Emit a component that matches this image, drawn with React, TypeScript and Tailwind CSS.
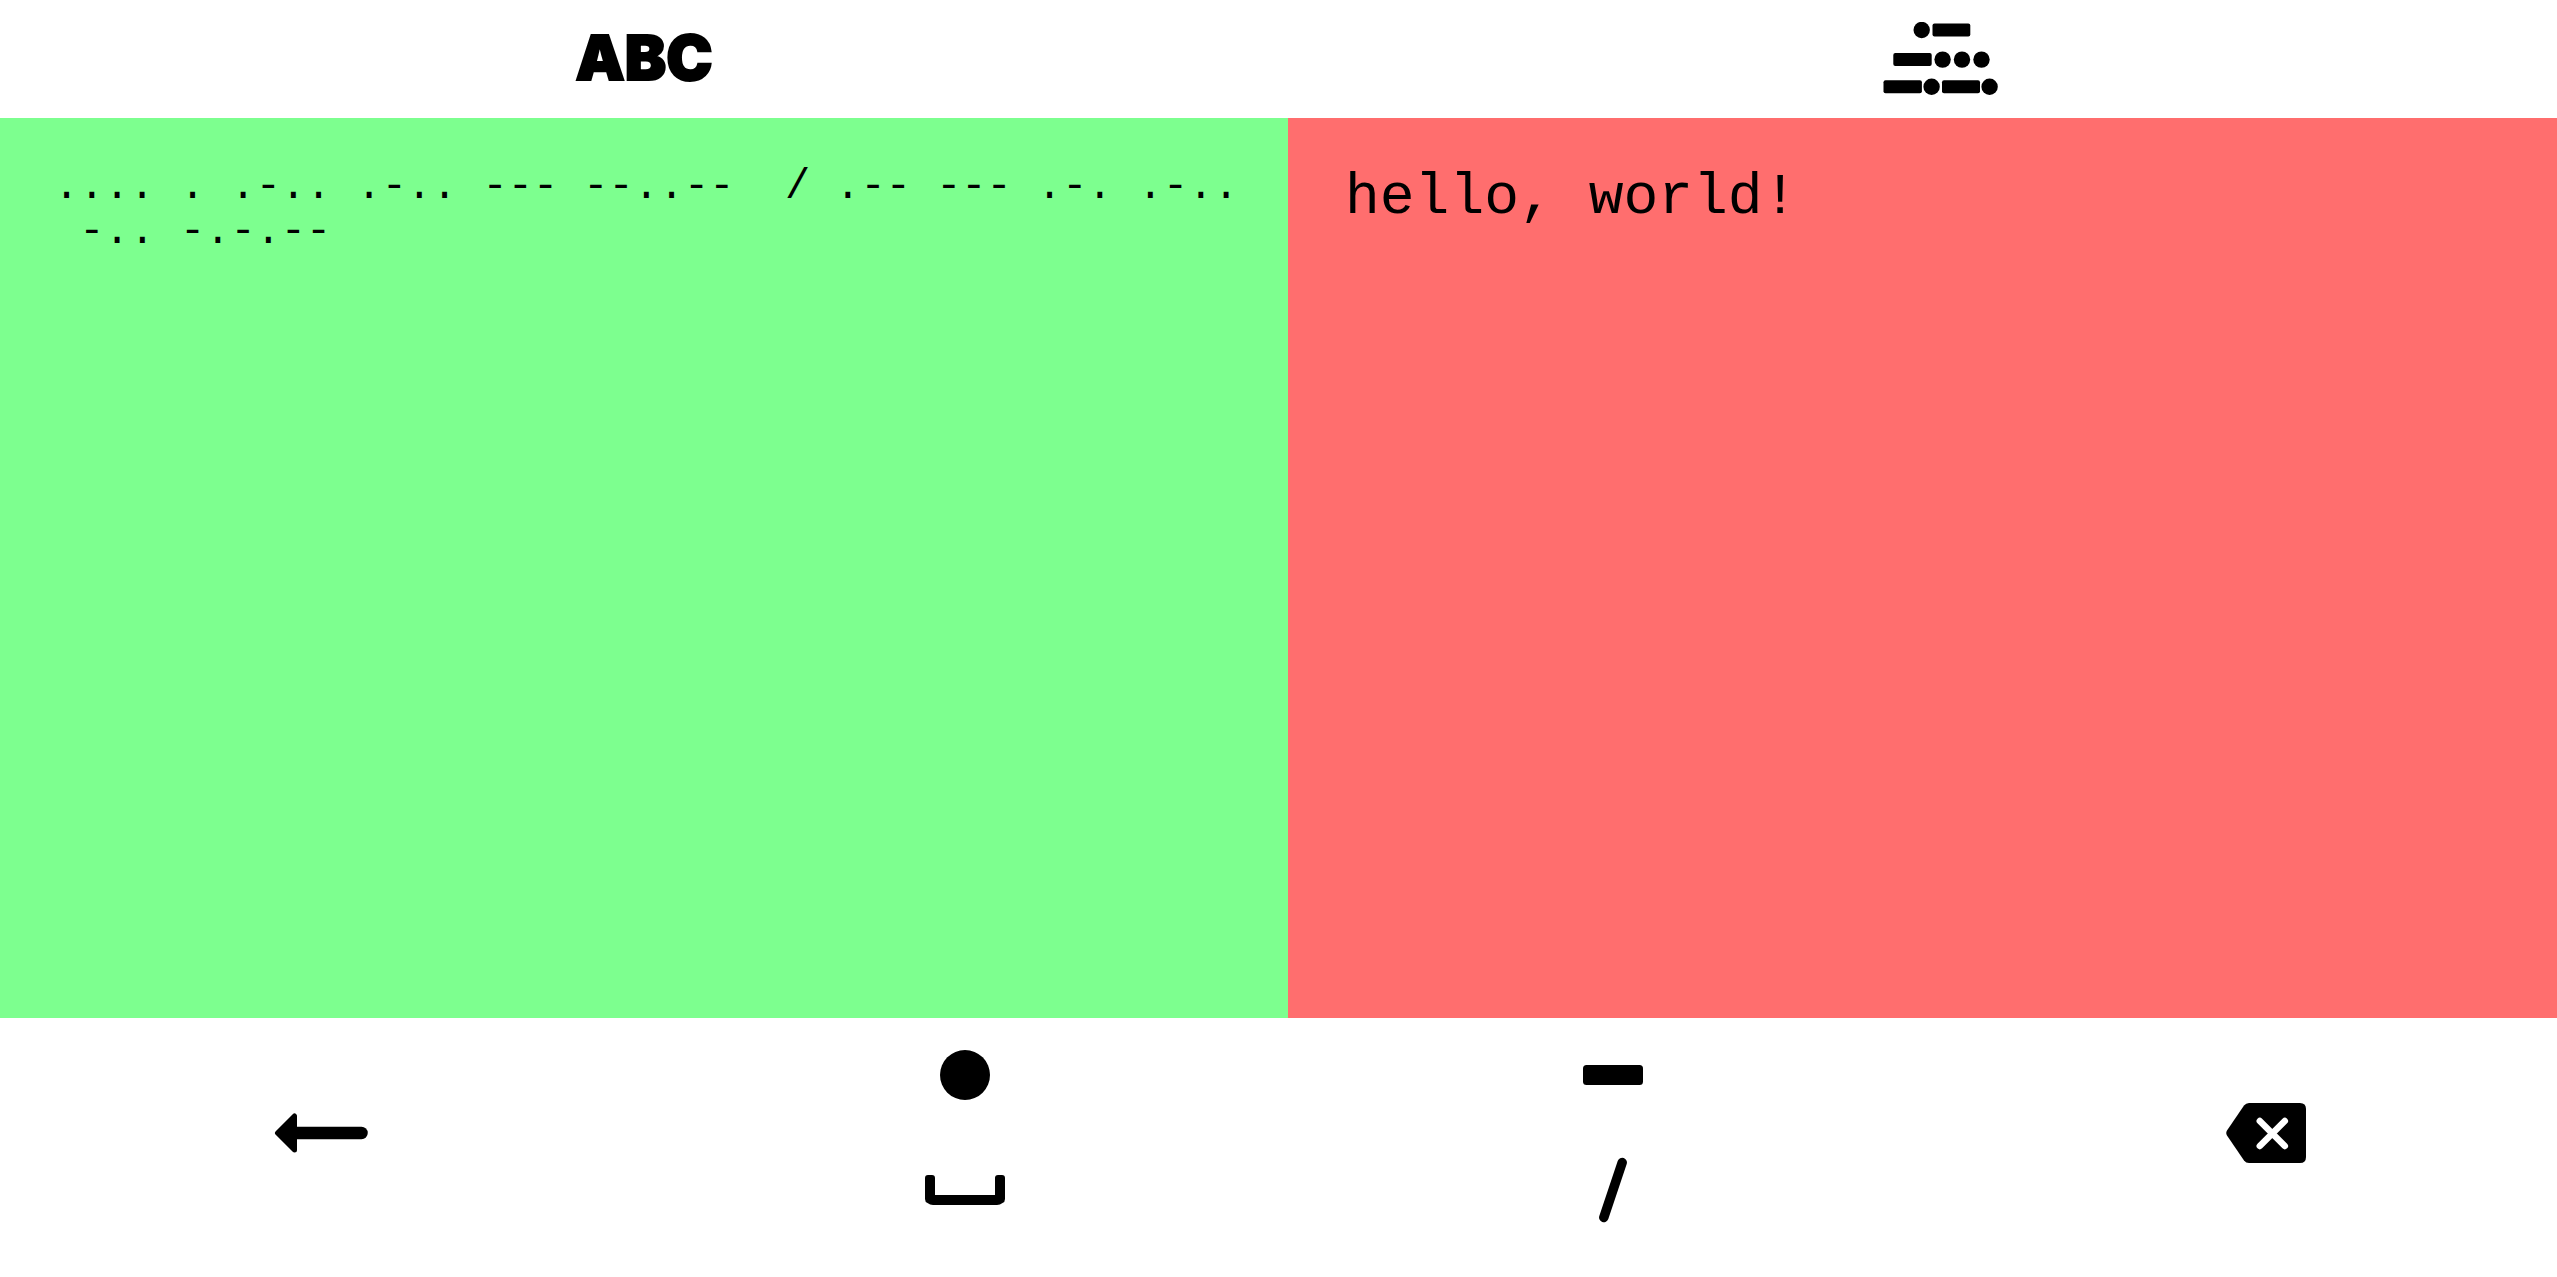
import { useState } from "react";
import type { ReactNode } from "react";

function MorseIcon() {
  return (
    <svg width="115" height="73" viewBox="0 0 115 73" aria-hidden="true">
      <circle cx="38.7" cy="8" r="8.2" />
      <rect x="49.5" y="1.6" width="37.8" height="13" rx="2" />
      <rect x="10.3" y="31.1" width="38.4" height="13" rx="2" />
      <circle cx="59.6" cy="37.6" r="8.2" />
      <circle cx="79" cy="37.6" r="8.2" />
      <circle cx="98.5" cy="37.6" r="8.2" />
      <rect x="0.5" y="58.2" width="38.4" height="13" rx="2" />
      <circle cx="48.6" cy="64.7" r="8.2" />
      <rect x="59" y="58.2" width="38" height="13" rx="2" />
      <circle cx="106.6" cy="64.7" r="8.2" />
    </svg>
  );
}

function ArrowIcon() {
  return (
    <svg width="94" height="42" viewBox="0 0 94 42" aria-hidden="true">
      <path
        d="M3.5 21 L20.5 4 V38 Z"
        stroke="black"
        strokeWidth="5"
        strokeLinejoin="round"
      />
      <path d="M20 21 H87.500" stroke="black" strokeWidth="12.500" strokeLinecap="round" />
    </svg>
  );
}

function DotIcon() {
  return (
    <svg width="50" height="50" viewBox="0 0 50 50" aria-hidden="true">
      <circle cx="25" cy="25" r="25" />
    </svg>
  );
}

function SpaceIcon() {
  return (
    <svg width="80" height="30" viewBox="0 0 80 30" aria-hidden="true">
      <path d="M3 0 H7 Q10 0 10 3 V20 H70 V3 Q70 0 73 0 H77 Q80 0 80 3 V24 Q80 27 77.500 28 Q75 30 72 30 H8 Q5 30 2.500 28 Q0 27 0 24 V3 Q0 0 3 0 Z" />
    </svg>
  );
}

function DashIcon() {
  return (
    <svg width="60" height="20" viewBox="0 0 60 20" aria-hidden="true">
      <rect width="60" height="20" rx="3.5" />
    </svg>
  );
}

function SlashIcon() {
  return (
    <svg width="28" height="66" viewBox="0 0 28 66" aria-hidden="true">
      <path d="M23.2 5.5 L4.8 60.5" stroke="black" strokeWidth="9.5" strokeLinecap="round" />
    </svg>
  );
}

function BackspaceIcon() {
  return (
    <svg width="80" height="60" viewBox="0 0 80 60" aria-hidden="true">
      <path d="M23 0 H74 Q80 0 80 6 V54 Q80 60 74 60 H23 Q20 60 18 57.500 L1 32.500 Q-0.500 30 1 27.500 L18 2.500 Q20 0 23 0 Z" />
      <path
        d="M33.800 18 L58.800 43 M58.800 18 L33.800 43"
        stroke="white"
        strokeWidth="6.500"
        strokeLinecap="round"
      />
    </svg>
  );
}

function Key({
  label,
  onClick,
  children,
}: {
  label: string;
  onClick?: () => void;
  children: ReactNode;
}) {
  return (
    <button
      type="button"
      aria-label={label}
      onClick={onClick}
      className="flex flex-1 cursor-pointer items-center justify-center"
    >
      {children}
    </button>
  );
}

export default function App() {
  const [morse, setMorse] = useState(
    ".... . .-.. .-.. --- --..--  / .-- --- .-. .-..\n -.. -.-.--",
  );
  const [plain, setPlain] = useState("hello, world!");
  const append = (s: string) => setMorse((m) => m + s);

  return (
    <div className="flex h-screen flex-col overflow-hidden bg-white text-black">
      <header className="grid h-[118px] w-[calc(100%+36px)] shrink-0 grid-cols-[1288fr_1305fr] pb-[2px]">
        <h1 className="flex items-center justify-center font-['Inter',sans-serif] text-[62px] leading-none font-black [-webkit-text-stroke:2px_black]">
          ABC
        </h1>
        <div className="flex items-center justify-center">
          <MorseIcon />
        </div>
      </header>

      <main className="grid min-h-0 w-[calc(100%+36px)] flex-1 grid-cols-[1288fr_1305fr] font-['Liberation_Mono',monospace]">
        <textarea
          aria-label="Morse code"
          spellCheck={false}
          value={morse}
          onChange={(e) => setMorse(e.target.value)}
          className="resize-none overflow-hidden bg-[#7dff8f] py-[47px] pr-[36px] pl-[54px] text-[42px] leading-[45px] outline-none"
        />
        <textarea
          aria-label="Plain text"
          spellCheck={false}
          value={plain}
          onChange={(e) => setPlain(e.target.value)}
          className="resize-none overflow-hidden bg-[#ff6e6e] py-[47px] pr-[36px] pl-[57px] text-[58px] leading-[66px] outline-none"
        />
      </main>

      <footer className="grid w-[calc(100%+36px)] shrink-0 grid-cols-[642fr_646fr_650fr_655fr] pb-[30px]">
        <div className="flex h-[229px] flex-col">
          <Key label="New line" onClick={() => append("\n")}>
            <ArrowIcon />
          </Key>
        </div>
        <div className="flex h-[229px] flex-col">
          <Key label="Dot" onClick={() => append(".")}>
            <DotIcon />
          </Key>
          <Key label="Space" onClick={() => append(" ")}>
            <SpaceIcon />
          </Key>
        </div>
        <div className="flex h-[229px] flex-col">
          <Key label="Dash" onClick={() => append("-")}>
            <DashIcon />
          </Key>
          <Key label="Slash" onClick={() => append("/")}>
            <SlashIcon />
          </Key>
        </div>
        <div className="flex h-[229px] flex-col">
          <Key label="Backspace" onClick={() => setMorse((m) => m.slice(0, -1))}>
            <BackspaceIcon />
          </Key>
        </div>
      </footer>
    </div>
  );
}
